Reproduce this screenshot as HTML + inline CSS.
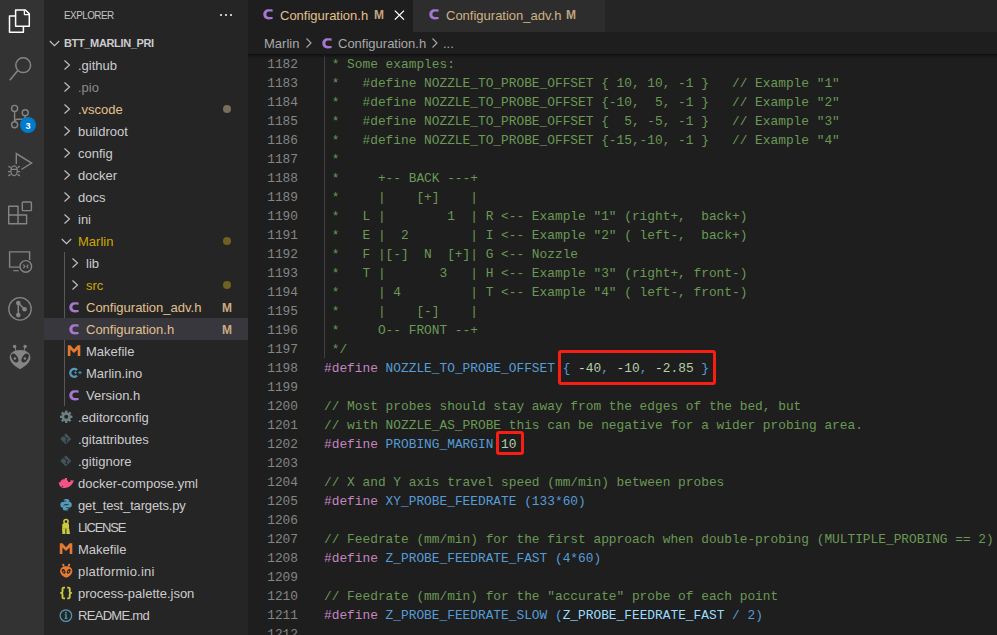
<!DOCTYPE html>
<html><head><meta charset="utf-8">
<style>
*{margin:0;padding:0;box-sizing:border-box}
html,body{width:997px;height:635px;overflow:hidden;background:#1e1e1e;font-family:"Liberation Sans",sans-serif}
.abs{position:absolute}
#act{left:0;top:0;width:44px;height:635px;background:#333333}
#side{left:44px;top:0;width:204px;height:635px;background:#252526;color:#cccccc;font-size:13px;overflow:hidden}
#tabs{left:248px;top:0;width:749px;height:32px;background:#252526}
.tab{top:0;height:32px;font-size:13px;white-space:pre;overflow:hidden}
#tab1{left:248px;width:165px;background:#1e1e1e}
#tab2{left:413px;width:192px;background:#2d2d2d}
#crumb{left:248px;top:32px;width:749px;height:22px;background:#1e1e1e;color:#a9a9a9;font-size:13px;white-space:pre}
#shadow{left:248px;top:54px;width:749px;height:4px;background:linear-gradient(#0f0f0f,rgba(30,30,30,0));z-index:5}
#ed{left:248px;top:54px;width:749px;height:581px;overflow:hidden;font-family:"Liberation Mono",monospace;font-size:12.83px;white-space:pre}
.ln{position:absolute;left:0;width:50px;text-align:right;color:#858585;height:19px;line-height:19px}
.cl{position:absolute;left:76px;height:19px;line-height:19px;color:#d4d4d4}
.guide{position:absolute;left:76px;top:0;width:1px;height:304px;background:#404040}
.row{position:absolute;left:0;width:204px;height:22px;line-height:22px;white-space:pre}
.row.sel{background:#37373d}
.name{position:absolute;top:1px}
.ico{position:absolute}
.deco{position:absolute;left:178px;top:1px;font-size:12px;font-weight:700;color:#c9ab7e}
.dot{position:absolute;left:179px;top:7px;width:8px;height:8px;border-radius:50%}
.ic-c{position:absolute;font-weight:700;font-size:13px;color:#a074c4}
.ic-m{position:absolute;font-weight:700;font-size:14px;color:#e37933}
.box{position:absolute;border:3px solid #f81e14;border-radius:3px;z-index:6}
#sidehead{position:absolute;left:20px;top:0;height:30px;line-height:30px;font-size:11px;letter-spacing:-0.6px;color:#c4c4c4;transform:scaleX(0.9);transform-origin:0 0}
#proj{position:absolute;left:20px;top:32px;height:22px;line-height:22px;font-size:11px;font-weight:700;letter-spacing:-0.35px;color:#cccccc}
#iguide{position:absolute;left:20px;top:252px;width:1px;height:154px;background:#585858}
</style></head><body>
<div id="act" class="abs">
<svg class="ico" style="left:0;top:0" width="44" height="400" viewBox="0 0 44 400">
<g fill="none" stroke="#ffffff" stroke-width="1.5" stroke-linejoin="round">
<path d="M15.6,10 H25.4 L29.3,13.9 V26.2 H15.6 Z"/>
<path d="M24.4,10.2 V14.6 H29.2" stroke-width="1.3"/>
<path d="M15.6,16 H9.5 V32.2 H23.4 V26.2"/>
</g>
<g fill="none" stroke="#858585" stroke-width="1.5">
<circle cx="23.2" cy="65.2" r="7.4"/>
<path d="M17.8,70.6 L9.8,80.3"/>
</g>
<g fill="none" stroke="#858585" stroke-width="1.4">
<circle cx="14.6" cy="108.4" r="3"/>
<circle cx="25.2" cy="112.7" r="3"/>
<circle cx="14.6" cy="124.8" r="3"/>
<path d="M14.6,111.4 V121.8"/>
<path d="M25.2,115.7 V116.5 Q25.2,119.2 22.5,119.2 H17.5 Q14.6,119.2 14.6,122"/>
</g>
<circle cx="28" cy="125" r="8" fill="#007acc"/>
<text x="28.1" y="129" text-anchor="middle" font-family="Liberation Sans" font-weight="700" font-size="9.2" fill="#ffffff">3</text>
<g fill="none" stroke="#858585" stroke-width="1.4" stroke-linejoin="miter">
<path d="M16.3,164.1 V153.6 L31.6,163.1 L21.4,169.5"/>
</g>
<g fill="none" stroke="#858585" stroke-width="1.3">
<ellipse cx="14.1" cy="170.7" rx="3.2" ry="4.9"/>
<path d="M11,169.3 H17.2 M10.6,167.6 L8.4,166.2 M10.3,171.6 H8 M10.6,174.4 L8.4,175.9 M17.6,167.6 L19.8,166.2 M17.9,171.6 H20.2 M17.6,174.4 L19.8,175.9"/>
</g>
<g fill="none" stroke="#858585" stroke-width="1.4" stroke-linejoin="miter">
<path d="M8.7,206.3 H18 V215 H26.6 V223.8 H8.7 Z" stroke-linejoin="round"/>
<path d="M8.7,215 H18 V223.8"/>
<rect x="22.3" y="202" width="9.1" height="8.6" rx="0.8"/>
</g>
<g fill="none" stroke="#858585" stroke-width="1.4">
<path d="M19.6,267.1 H9.6 V251.9 H29.6 V260"/>
<path d="M13.3,270.7 H18.6" stroke-width="1.2"/>
<circle cx="25.8" cy="266.4" r="5.8"/>
<path d="M23.3,264.6 L24.9,266.4 L23.3,268.2 M28.3,264.6 L26.7,266.4 L28.3,268.2" stroke-width="1.1"/>
</g>
<g fill="none" stroke="#858585" stroke-width="1.3">
<circle cx="20" cy="308.9" r="11.2"/>
<path d="M18.3,303 V315.1 M18.3,303 L24.6,309.3" stroke-width="1.5"/>
</g>
<g fill="#858585">
<circle cx="18.3" cy="303" r="2.3"/><circle cx="24.6" cy="309.3" r="2.3"/><circle cx="18.3" cy="315.1" r="2.3"/>
<path d="M20,349.9 C26.6,349.9 30.4,353.2 30.4,357.6 C30.4,362.2 25.4,366.4 20,369.2 C14.6,366.4 9.7,362.2 9.7,357.6 C9.7,353.2 13.4,349.9 20,349.9 Z"/>
<circle cx="14.65" cy="346.5" r="1.7"/><circle cx="25.1" cy="346.5" r="1.7"/>
<path d="M14.65,346.5 L15.4,351 L16.4,351 L15.4,346.5 Z M25.1,346.5 L24.6,351 L23.6,351 L24.4,346.5 Z"/>
</g>
<g fill="#333333">
<ellipse cx="14.75" cy="358" rx="4.9" ry="2.9" transform="rotate(58 14.75 358)"/>
<ellipse cx="25.15" cy="358" rx="4.9" ry="2.9" transform="rotate(-58 25.15 358)"/>
</g>
<g fill="#858585"><circle cx="14.9" cy="358.5" r="1.2"/><circle cx="24.9" cy="358.5" r="1.2"/></g>
</svg>
</div>
<div id="side" class="abs">
<div id="sidehead">EXPLORER</div>
<svg class="ico" style="left:175px;top:13px" width="14" height="4"><rect x="1" y="1" width="2" height="2" fill="#c5c5c5"/><rect x="6" y="1" width="2" height="2" fill="#c5c5c5"/><rect x="11" y="1" width="2" height="2" fill="#c5c5c5"/></svg>
<svg class="ico" style="left:5px;top:40px" width="12" height="10" viewBox="0 0 12 10"><path d="M0.8 1 L5.5 5.7 L10.2 1" fill="none" stroke="#c5c5c5" stroke-width="1.1"/></svg>
<div id="proj">BTT_MARLIN_PRI</div>
<div id="iguide"></div>
<div class="row" style="top:54px"><svg class="ico" style="left:19px;top:5px" width="10" height="12" viewBox="0 0 10 12"><path d="M1.5 1.5 L6.5 6 L1.5 10.5" fill="none" stroke="#c5c5c5" stroke-width="1.1"/></svg><div class="name" style="left:34px">.github</div></div>
<div class="row" style="top:76px"><svg class="ico" style="left:19px;top:5px" width="10" height="12" viewBox="0 0 10 12"><path d="M1.5 1.5 L6.5 6 L1.5 10.5" fill="none" stroke="#c5c5c5" stroke-width="1.1"/></svg><div class="name" style="left:34px;color:#8c8c8c">.pio</div></div>
<div class="row" style="top:98px"><svg class="ico" style="left:19px;top:5px" width="10" height="12" viewBox="0 0 10 12"><path d="M1.5 1.5 L6.5 6 L1.5 10.5" fill="none" stroke="#c5c5c5" stroke-width="1.1"/></svg><div class="name" style="left:34px;color:#e2c08d">.vscode</div><div class="dot" style="background:#7b6e58"></div></div>
<div class="row" style="top:120px"><svg class="ico" style="left:19px;top:5px" width="10" height="12" viewBox="0 0 10 12"><path d="M1.5 1.5 L6.5 6 L1.5 10.5" fill="none" stroke="#c5c5c5" stroke-width="1.1"/></svg><div class="name" style="left:34px">buildroot</div></div>
<div class="row" style="top:142px"><svg class="ico" style="left:19px;top:5px" width="10" height="12" viewBox="0 0 10 12"><path d="M1.5 1.5 L6.5 6 L1.5 10.5" fill="none" stroke="#c5c5c5" stroke-width="1.1"/></svg><div class="name" style="left:34px">config</div></div>
<div class="row" style="top:164px"><svg class="ico" style="left:19px;top:5px" width="10" height="12" viewBox="0 0 10 12"><path d="M1.5 1.5 L6.5 6 L1.5 10.5" fill="none" stroke="#c5c5c5" stroke-width="1.1"/></svg><div class="name" style="left:34px">docker</div></div>
<div class="row" style="top:186px"><svg class="ico" style="left:19px;top:5px" width="10" height="12" viewBox="0 0 10 12"><path d="M1.5 1.5 L6.5 6 L1.5 10.5" fill="none" stroke="#c5c5c5" stroke-width="1.1"/></svg><div class="name" style="left:34px">docs</div></div>
<div class="row" style="top:208px"><svg class="ico" style="left:19px;top:5px" width="10" height="12" viewBox="0 0 10 12"><path d="M1.5 1.5 L6.5 6 L1.5 10.5" fill="none" stroke="#c5c5c5" stroke-width="1.1"/></svg><div class="name" style="left:34px">ini</div></div>
<div class="row" style="top:230px"><svg class="ico" style="left:17px;top:8px" width="12" height="10" viewBox="0 0 12 10"><path d="M0.8 1 L5.5 5.7 L10.2 1" fill="none" stroke="#c5c5c5" stroke-width="1.1"/></svg><div class="name" style="left:34px;color:#cca700">Marlin</div><div class="dot" style="background:#6f6121"></div></div>
<div class="row" style="top:252px"><svg class="ico" style="left:27px;top:5px" width="10" height="12" viewBox="0 0 10 12"><path d="M1.5 1.5 L6.5 6 L1.5 10.5" fill="none" stroke="#c5c5c5" stroke-width="1.1"/></svg><div class="name" style="left:42px">lib</div></div>
<div class="row" style="top:274px"><svg class="ico" style="left:27px;top:5px" width="10" height="12" viewBox="0 0 10 12"><path d="M1.5 1.5 L6.5 6 L1.5 10.5" fill="none" stroke="#c5c5c5" stroke-width="1.1"/></svg><div class="name" style="left:42px;color:#cca700">src</div><div class="dot" style="background:#6f6121"></div></div>
<div class="row" style="top:296px"><svg class="ico" style="left:25px;top:5.5px" width="12" height="12" viewBox="0 0 12 12"><path d="M9.6,0.5 C8.7,0.3 7.4,0.2 5.6,0.2 C2.3,0.2 0.3,2.3 0.3,5.3 C0.3,8.3 2.3,10.4 5.6,10.4 C7.4,10.4 8.7,10.3 9.6,10.1 V7.9 C8.9,8 7.4,8.1 6.1,8.1 C4.4,8.1 3.4,7 3.4,5.3 C3.4,3.6 4.4,2.5 6.1,2.5 C7.4,2.5 8.9,2.6 9.6,2.7 Z" fill="#a876cc"/></svg><div class="name" style="left:42px;color:#e2c08d">Configuration_adv.h</div><div class="deco">M</div></div>
<div class="row sel" style="top:318px"><svg class="ico" style="left:25px;top:5.5px" width="12" height="12" viewBox="0 0 12 12"><path d="M9.6,0.5 C8.7,0.3 7.4,0.2 5.6,0.2 C2.3,0.2 0.3,2.3 0.3,5.3 C0.3,8.3 2.3,10.4 5.6,10.4 C7.4,10.4 8.7,10.3 9.6,10.1 V7.9 C8.9,8 7.4,8.1 6.1,8.1 C4.4,8.1 3.4,7 3.4,5.3 C3.4,3.6 4.4,2.5 6.1,2.5 C7.4,2.5 8.9,2.6 9.6,2.7 Z" fill="#a876cc"/></svg><div class="name" style="left:42px;color:#e2c08d">Configuration.h</div><div class="deco">M</div></div>
<div class="row" style="top:340px"><svg class="ico" style="left:22px;top:0" width="18" height="22" viewBox="0 0 18 22"><path d="M1.8,15.9 V5.2 H4.4 L8,9.2 L11.6,5.2 H14.3 V15.9 H11.7 V9.4 L8,13 L4.4,9.4 V15.9 Z" fill="#e37933"/></svg><div class="name" style="left:42px">Makefile</div></div>
<div class="row" style="top:362px"><svg class="ico" style="left:22.6px;top:0" width="18" height="22" viewBox="0 0 18 22"><path d="M9.96,8.09 A3.9,3.9 0 1 0 9.96,13.61" fill="none" stroke="#519aba" stroke-width="2.4"/><path d="M11.4,10.6 H14.6 M13,9 V12.2 M7.4,10.6 H9.6 M8.5,9.5 V11.7" stroke="#519aba" stroke-width="1"/></svg><div class="name" style="left:42px">Marlin.ino</div></div>
<div class="row" style="top:384px"><svg class="ico" style="left:25px;top:5.5px" width="12" height="12" viewBox="0 0 12 12"><path d="M9.6,0.5 C8.7,0.3 7.4,0.2 5.6,0.2 C2.3,0.2 0.3,2.3 0.3,5.3 C0.3,8.3 2.3,10.4 5.6,10.4 C7.4,10.4 8.7,10.3 9.6,10.1 V7.9 C8.9,8 7.4,8.1 6.1,8.1 C4.4,8.1 3.4,7 3.4,5.3 C3.4,3.6 4.4,2.5 6.1,2.5 C7.4,2.5 8.9,2.6 9.6,2.7 Z" fill="#a876cc"/></svg><div class="name" style="left:42px">Version.h</div></div>
<div class="row" style="top:406px"><svg class="ico" style="left:14px;top:0" width="18" height="22" viewBox="0 0 18 22"><g fill="#6d8086" transform="translate(0,0)"><g transform="translate(0,0)"><rect x="7" y="4.6" width="2.4" height="3" transform="rotate(0 8.2 10.8)"/><rect x="7" y="4.6" width="2.4" height="3" transform="rotate(45 8.2 10.8)"/><rect x="7" y="4.6" width="2.4" height="3" transform="rotate(90 8.2 10.8)"/><rect x="7" y="4.6" width="2.4" height="3" transform="rotate(135 8.2 10.8)"/><rect x="7" y="4.6" width="2.4" height="3" transform="rotate(180 8.2 10.8)"/><rect x="7" y="4.6" width="2.4" height="3" transform="rotate(225 8.2 10.8)"/><rect x="7" y="4.6" width="2.4" height="3" transform="rotate(270 8.2 10.8)"/><rect x="7" y="4.6" width="2.4" height="3" transform="rotate(315 8.2 10.8)"/><circle cx="8.2" cy="10.8" r="4.6"/></g></g><circle cx="8.2" cy="10.8" r="2" fill="#252526"/></svg><div class="name" style="left:34px">.editorconfig</div></div>
<div class="row" style="top:428px"><svg class="ico" style="left:14px;top:0" width="18" height="22" viewBox="0 0 18 22"><g transform="rotate(45 7.8 10.9)"><rect x="3.8" y="6.9" width="8" height="8" rx="1" fill="#41535b"/></g><path d="M6.2,8.2 L8.4,10.4 M8.4,10.4 V13.6 M8.4,10.4 L10.3,10.4" stroke="#252526" stroke-width="1" fill="none"/><circle cx="6.2" cy="8.2" r="0.9" fill="#252526"/><circle cx="8.4" cy="13.6" r="0.9" fill="#252526"/></svg><div class="name" style="left:34px">.gitattributes</div></div>
<div class="row" style="top:450px"><svg class="ico" style="left:14px;top:0" width="18" height="22" viewBox="0 0 18 22"><g transform="rotate(45 7.8 10.9)"><rect x="3.8" y="6.9" width="8" height="8" rx="1" fill="#41535b"/></g><path d="M6.2,8.2 L8.4,10.4 M8.4,10.4 V13.6 M8.4,10.4 L10.3,10.4" stroke="#252526" stroke-width="1" fill="none"/><circle cx="6.2" cy="8.2" r="0.9" fill="#252526"/><circle cx="8.4" cy="13.6" r="0.9" fill="#252526"/></svg><div class="name" style="left:34px">.gitignore</div></div>
<div class="row" style="top:472px"><svg class="ico" style="left:14px;top:0" width="18" height="22" viewBox="0 0 18 22"><path fill="#f55385" d="M0.8,10.2 H2.5 L2.9,8.2 H4.3 V7.2 H6.9 V5.9 H9 V8.5 H10 V10 H12.2 L12.8,8 L14.3,8.6 H16.1 L15,10.6 C13.8,13.6 10.5,16 6.6,16 C3.2,16 1,13.8 0.8,10.2 Z"/><circle cx="4.6" cy="14.3" r="0.65" fill="#252526"/></svg><div class="name" style="left:34px">docker-compose.yml</div></div>
<div class="row" style="top:494px"><svg class="ico" style="left:14px;top:0" width="18" height="22" viewBox="0 0 18 22"><g fill="#519aba"><path d="M8,5 C5.5,5 5.8,6.2 5.8,6.2 V7.6 H8.3 V8.1 H4.6 C4.6,8.1 2.4,7.9 2.4,10.8 C2.4,13.7 4.3,13.6 4.3,13.6 H5.4 V12.1 C5.4,12.1 5.3,10.3 7.2,10.3 H9.6 C9.6,10.3 11.3,10.3 11.3,8.6 V6.6 C11.3,6.6 11.5,5 8,5 Z"/><path d="M8.1,16.6 C10.6,16.6 10.4,15.4 10.4,15.4 V14 H7.9 V13.5 H11.6 C11.6,13.5 13.8,13.7 13.8,10.8 C13.8,7.9 11.9,8 11.9,8 H10.8 V9.5 C10.8,9.5 10.9,11.3 9,11.3 H6.6 C6.6,11.3 4.9,11.3 4.9,13 V15 C4.9,15 4.7,16.6 8.1,16.6 Z"/></g><circle cx="6.9" cy="6.3" r="0.55" fill="#252526"/><circle cx="9.3" cy="15.3" r="0.55" fill="#252526"/></svg><div class="name" style="left:34px;letter-spacing:-0.15px">get_test_targets.py</div></div>
<div class="row" style="top:516px"><svg class="ico" style="left:14px;top:0" width="18" height="22" viewBox="0 0 18 22"><circle cx="8" cy="5.6" r="2.1" fill="none" stroke="#cbcb41" stroke-width="1.5"/><g fill="#cbcb41"><path d="M4.2,8.8 Q4.2,7.4 5.6,7.4 H9.6 Q11,7.4 11,8.8 V12.8 H4.2 Z"/><path d="M4,12.6 H7.4 V18 H4.4 Z"/><path d="M8.4,12.6 H11.2 L12,18 H8.4 Z"/></g></svg><div class="name" style="left:34px;letter-spacing:-1.2px">LICENSE</div></div>
<div class="row" style="top:538px"><svg class="ico" style="left:14px;top:0" width="18" height="22" viewBox="0 0 18 22"><path d="M1.8,15.9 V5.2 H4.4 L8,9.2 L11.6,5.2 H14.3 V15.9 H11.7 V9.4 L8,13 L4.4,9.4 V15.9 Z" fill="#e37933"/></svg><div class="name" style="left:34px">Makefile</div></div>
<div class="row" style="top:560px"><svg class="ico" style="left:14px;top:0" width="18" height="22" viewBox="0 0 18 22"><g fill="#e37933"><path d="M8.2,6.3 C12.2,6.3 14.3,8.4 14.3,11.2 C14.3,14.2 11.4,16.4 8.2,17.8 C5,16.4 2.1,14.2 2.1,11.2 C2.1,8.4 4.2,6.3 8.2,6.3 Z"/><circle cx="5.3" cy="5" r="1.15"/><circle cx="11.1" cy="5" r="1.15"/><path d="M5,5 L5.8,7 H6.6 L5.8,5 Z M11.4,5 L10.6,7 H9.8 L10.6,5 Z"/></g><g fill="#252526"><ellipse cx="5.7" cy="11.3" rx="2.5" ry="1.6" transform="rotate(55 5.7 11.3)"/><ellipse cx="10.7" cy="11.3" rx="2.5" ry="1.6" transform="rotate(-55 10.7 11.3)"/></g><g fill="#e37933"><circle cx="5.8" cy="11.5" r="0.7"/><circle cx="10.6" cy="11.5" r="0.7"/></g></svg><div class="name" style="left:34px;letter-spacing:0.2px">platformio.ini</div></div>
<div class="row" style="top:582px"><svg class="ico" style="left:14px;top:0" width="18" height="22" viewBox="0 0 18 22"><g fill="none" stroke="#cbcb41" stroke-width="1.9" stroke-linejoin="round"><path d="M7,5.6 H5.7 Q4.5,5.6 4.5,6.8 V9.4 Q4.5,10.9 3,10.9 Q4.5,10.9 4.5,12.4 V15.2 Q4.5,16.4 5.7,16.4 H7"/><path d="M9.2,5.6 H10.5 Q11.7,5.6 11.7,6.8 V9.4 Q11.7,10.9 13.2,10.9 Q11.7,10.9 11.7,12.4 V15.2 Q11.7,16.4 10.5,16.4 H9.2"/></g></svg><div class="name" style="left:34px">process-palette.json</div></div>
<div class="row" style="top:604px"><svg class="ico" style="left:14px;top:0" width="18" height="22" viewBox="0 0 18 22"><circle cx="7.9" cy="11.6" r="5.8" fill="none" stroke="#519aba" stroke-width="1.2"/><g fill="#519aba"><circle cx="7.9" cy="8.7" r="0.9"/><path d="M6.6,10.3 H8.7 V14.2 H9.5 V15 H6.5 V14.2 H7.3 V11.1 H6.6 Z"/></g></svg><div class="name" style="left:34px;letter-spacing:-0.7px">README.md</div></div>
</div>
<div id="tabs" class="abs"></div>
<div id="tab1" class="abs tab"><svg class="ico" style="left:15.2px;top:9.2px" width="12" height="12" viewBox="0 0 12 12"><path d="M9.6,0.5 C8.7,0.3 7.4,0.2 5.6,0.2 C2.3,0.2 0.3,2.3 0.3,5.3 C0.3,8.3 2.3,10.4 5.6,10.4 C7.4,10.4 8.7,10.3 9.6,10.1 V7.9 C8.9,8 7.4,8.1 6.1,8.1 C4.4,8.1 3.4,7 3.4,5.3 C3.4,3.6 4.4,2.5 6.1,2.5 C7.4,2.5 8.9,2.6 9.6,2.7 Z" fill="#a876cc"/></svg><div style="position:absolute;left:32px;top:1px;line-height:30px;color:#e2c08d">Configuration.h</div><div style="position:absolute;left:126px;top:0.3px;line-height:30px;color:#c2a77e;font-weight:700;font-size:12px">M</div><svg class="ico" style="left:146px;top:9.6px" width="11" height="10" viewBox="0 0 11 10"><path d="M0.8,0.6 L10,9.6 M10,0.6 L0.8,9.6" stroke="#ffffff" stroke-width="1.3"/></svg></div>
<div id="tab2" class="abs tab"><svg class="ico" style="left:15.7px;top:9.2px" width="12" height="12" viewBox="0 0 12 12"><path d="M9.6,0.5 C8.7,0.3 7.4,0.2 5.6,0.2 C2.3,0.2 0.3,2.3 0.3,5.3 C0.3,8.3 2.3,10.4 5.6,10.4 C7.4,10.4 8.7,10.3 9.6,10.1 V7.9 C8.9,8 7.4,8.1 6.1,8.1 C4.4,8.1 3.4,7 3.4,5.3 C3.4,3.6 4.4,2.5 6.1,2.5 C7.4,2.5 8.9,2.6 9.6,2.7 Z" fill="#a876cc"/></svg><div style="position:absolute;left:33px;top:1px;line-height:30px;color:#d0b184">Configuration_adv.h</div><div style="position:absolute;left:153px;top:0.3px;line-height:30px;color:#bda37b;font-weight:700;font-size:12px">M</div></div>
<div id="crumb" class="abs"><div style="position:absolute;left:16px;top:1px;line-height:22px">Marlin</div><svg class="ico" style="left:57px;top:5px" width="8" height="12" viewBox="0 0 8 12"><path d="M1.5,1.5 L6,6 L1.5,10.5" fill="none" stroke="#a9a9a9" stroke-width="1.1"/></svg><svg class="ico" style="left:74.3px;top:6.2px" width="12" height="12" viewBox="0 0 12 12"><path d="M9.6,0.5 C8.7,0.3 7.4,0.2 5.6,0.2 C2.3,0.2 0.3,2.3 0.3,5.3 C0.3,8.3 2.3,10.4 5.6,10.4 C7.4,10.4 8.7,10.3 9.6,10.1 V7.9 C8.9,8 7.4,8.1 6.1,8.1 C4.4,8.1 3.4,7 3.4,5.3 C3.4,3.6 4.4,2.5 6.1,2.5 C7.4,2.5 8.9,2.6 9.6,2.7 Z" fill="#a876cc"/></svg><div style="position:absolute;left:90px;top:1px;line-height:22px">Configuration.h</div><svg class="ico" style="left:183px;top:5px" width="8" height="12" viewBox="0 0 8 12"><path d="M1.5,1.5 L6,6 L1.5,10.5" fill="none" stroke="#a9a9a9" stroke-width="1.1"/></svg><div style="position:absolute;left:195px;top:1px;line-height:22px">...</div></div>
<div id="shadow" class="abs"></div>
<div id="ed" class="abs"><div class="guide"></div>
<div class="ln" style="top:1px">1182</div><div class="cl" style="top:1px"><span style="color:#6a9955"> * Some examples:</span></div>
<div class="ln" style="top:20px">1183</div><div class="cl" style="top:20px"><span style="color:#6a9955"> *   #define NOZZLE_TO_PROBE_OFFSET { 10, 10, -1 }   // Example &quot;1&quot;</span></div>
<div class="ln" style="top:39px">1184</div><div class="cl" style="top:39px"><span style="color:#6a9955"> *   #define NOZZLE_TO_PROBE_OFFSET {-10,  5, -1 }   // Example &quot;2&quot;</span></div>
<div class="ln" style="top:58px">1185</div><div class="cl" style="top:58px"><span style="color:#6a9955"> *   #define NOZZLE_TO_PROBE_OFFSET {  5, -5, -1 }   // Example &quot;3&quot;</span></div>
<div class="ln" style="top:77px">1186</div><div class="cl" style="top:77px"><span style="color:#6a9955"> *   #define NOZZLE_TO_PROBE_OFFSET {-15,-10, -1 }   // Example &quot;4&quot;</span></div>
<div class="ln" style="top:96px">1187</div><div class="cl" style="top:96px"><span style="color:#6a9955"> *</span></div>
<div class="ln" style="top:115px">1188</div><div class="cl" style="top:115px"><span style="color:#6a9955"> *     +-- BACK ---+</span></div>
<div class="ln" style="top:134px">1189</div><div class="cl" style="top:134px"><span style="color:#6a9955"> *     |    [+]    |</span></div>
<div class="ln" style="top:153px">1190</div><div class="cl" style="top:153px"><span style="color:#6a9955"> *   L |        1  | R &lt;-- Example &quot;1&quot; (right+,  back+)</span></div>
<div class="ln" style="top:172px">1191</div><div class="cl" style="top:172px"><span style="color:#6a9955"> *   E |  2        | I &lt;-- Example &quot;2&quot; ( left-,  back+)</span></div>
<div class="ln" style="top:191px">1192</div><div class="cl" style="top:191px"><span style="color:#6a9955"> *   F |[-]  N  [+]| G &lt;-- Nozzle</span></div>
<div class="ln" style="top:210px">1193</div><div class="cl" style="top:210px"><span style="color:#6a9955"> *   T |       3   | H &lt;-- Example &quot;3&quot; (right+, front-)</span></div>
<div class="ln" style="top:229px">1194</div><div class="cl" style="top:229px"><span style="color:#6a9955"> *     | 4         | T &lt;-- Example &quot;4&quot; ( left-, front-)</span></div>
<div class="ln" style="top:248px">1195</div><div class="cl" style="top:248px"><span style="color:#6a9955"> *     |    [-]    |</span></div>
<div class="ln" style="top:267px">1196</div><div class="cl" style="top:267px"><span style="color:#6a9955"> *     O-- FRONT --+</span></div>
<div class="ln" style="top:286px">1197</div><div class="cl" style="top:286px"><span style="color:#6a9955"> */</span></div>
<div class="ln" style="top:305px">1198</div><div class="cl" style="top:305px"><span style="color:#c586c0">#define</span> <span style="color:#569cd6">NOZZLE_TO_PROBE_OFFSET</span> <span style="color:#569cd6">{</span> <span style="color:#d4d4d4">-</span><span style="color:#b5cea8">40</span><span style="color:#569cd6">,</span> <span style="color:#d4d4d4">-</span><span style="color:#b5cea8">10</span><span style="color:#569cd6">,</span> <span style="color:#d4d4d4">-</span><span style="color:#b5cea8">2.85</span> <span style="color:#569cd6">}</span></div>
<div class="ln" style="top:324px">1199</div><div class="cl" style="top:324px"></div>
<div class="ln" style="top:343px">1200</div><div class="cl" style="top:343px"><span style="color:#6a9955">// Most probes should stay away from the edges of the bed, but</span></div>
<div class="ln" style="top:362px">1201</div><div class="cl" style="top:362px"><span style="color:#6a9955">// with NOZZLE_AS_PROBE this can be negative for a wider probing area.</span></div>
<div class="ln" style="top:381px">1202</div><div class="cl" style="top:381px"><span style="color:#c586c0">#define</span> <span style="color:#569cd6">PROBING_MARGIN</span> <span style="color:#b5cea8">10</span></div>
<div class="ln" style="top:400px">1203</div><div class="cl" style="top:400px"></div>
<div class="ln" style="top:419px">1204</div><div class="cl" style="top:419px"><span style="color:#6a9955">// X and Y axis travel speed (mm/min) between probes</span></div>
<div class="ln" style="top:438px">1205</div><div class="cl" style="top:438px"><span style="color:#c586c0">#define</span> <span style="color:#569cd6">XY_PROBE_FEEDRATE</span> <span style="color:#569cd6">(133*60)</span></div>
<div class="ln" style="top:457px">1206</div><div class="cl" style="top:457px"></div>
<div class="ln" style="top:476px">1207</div><div class="cl" style="top:476px"><span style="color:#6a9955">// Feedrate (mm/min) for the first approach when double-probing (MULTIPLE_PROBING == 2)</span></div>
<div class="ln" style="top:495px">1208</div><div class="cl" style="top:495px"><span style="color:#c586c0">#define</span> <span style="color:#569cd6">Z_PROBE_FEEDRATE_FAST</span> <span style="color:#569cd6">(4*60)</span></div>
<div class="ln" style="top:514px">1209</div><div class="cl" style="top:514px"></div>
<div class="ln" style="top:533px">1210</div><div class="cl" style="top:533px"><span style="color:#6a9955">// Feedrate (mm/min) for the &quot;accurate&quot; probe of each point</span></div>
<div class="ln" style="top:552px">1211</div><div class="cl" style="top:552px"><span style="color:#c586c0">#define</span> <span style="color:#569cd6">Z_PROBE_FEEDRATE_SLOW</span> <span style="color:#569cd6">(</span><span style="color:#9cdcfe">Z_PROBE_FEEDRATE_FAST</span><span style="color:#569cd6"> / 2)</span></div>
<div class="ln" style="top:571px">1212</div><div class="cl" style="top:571px"></div>
</div>
<div class="box" style="left:558px;top:350px;width:158px;height:35px"></div>
<div class="box" style="left:496px;top:431px;width:28px;height:24px"></div>
</body></html>
